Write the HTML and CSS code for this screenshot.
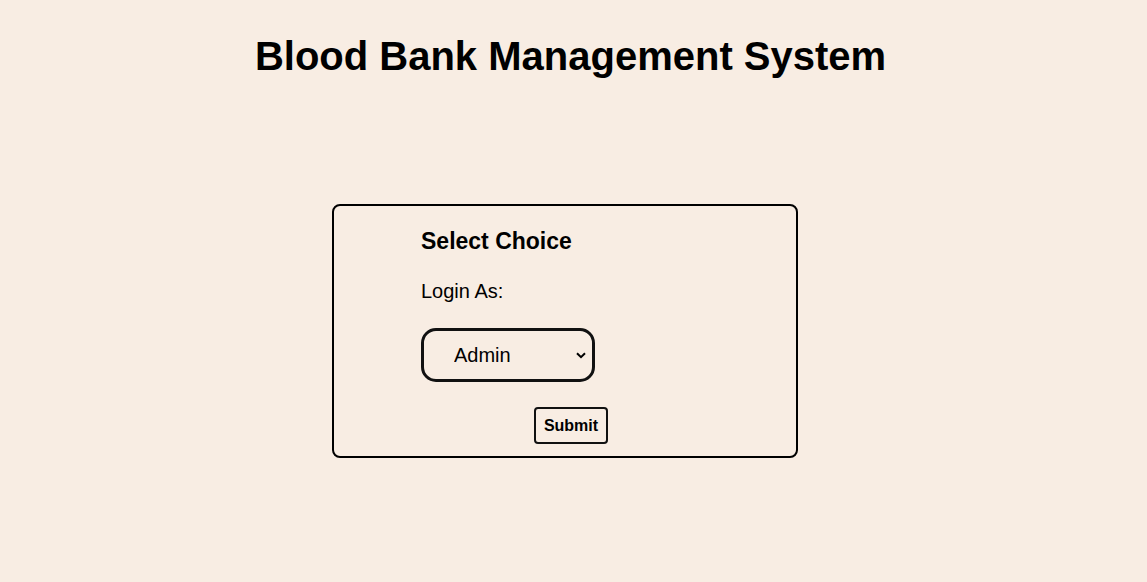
FILE: index.html
```html
<!DOCTYPE html>
<html>
<head>
<meta charset="utf-8">
<title>Blood Bank Management System</title>
<link rel="stylesheet" href="styles.css">
</head>
<body>
<h1 class="title">Blood Bank Management System</h1>
<div class="card">
  <form class="choice-form">
    <h3 class="form-heading">Select Choice</h3>
    <label class="form-label" for="role">Login As:</label>
    <div class="select-wrap">
      <select class="role-select" id="role">
        <option>Admin</option>
        <option>Donor</option>
        <option>Patient</option>
      </select>
      <svg class="select-arrow" width="10" height="7" viewBox="0 0 10 7" aria-hidden="true">
        <path d="M1 1.2 L5 5.2 L9 1.2" fill="none" stroke="#000" stroke-width="2"/>
      </svg>
    </div>
    <button type="button" class="submit-btn">Submit</button>
  </form>
</div>
</body>
</html>
```
FILE: styles.css
```css
html, body {
  margin: 0;
  padding: 0;
  background: #f8ede3;
  font-family: "Liberation Sans", Arial, sans-serif;
  color: #000;
}
.title {
  margin: 33px 0 0;
  padding-right: 6px;
  font-size: 40px;
  font-weight: bold;
  text-align: center;
  line-height: 46px;
}
.card {
  box-sizing: border-box;
  width: 466px;
  margin: 125px 0 0 332px;
  height: 254px;
  border: 2px solid #000;
  border-radius: 8px;
  padding: 22px 0 0 87px;
}
.choice-form {
  display: flex;
  flex-direction: column;
  align-items: flex-start;
}
.form-heading {
  margin: 0;
  font-size: 23px;
  line-height: 26px;
  font-weight: bold;
}
.form-label {
  margin-top: 26px;
  font-size: 20px;
  line-height: 23px;
}
.select-wrap {
  position: relative;
  margin-top: 25px;
  width: 174px;
  height: 54px;
}
.role-select {
  -webkit-appearance: none;
  appearance: none;
  box-sizing: border-box;
  width: 174px;
  height: 54px;
  border: 3px solid #111;
  border-radius: 15px;
  background: transparent;
  font-family: "Liberation Sans", Arial, sans-serif;
  font-size: 20px;
  color: #000;
  padding: 0 24px 0 30px;
  outline: none;
}
.select-arrow {
  position: absolute;
  left: 155px;
  top: 24px;
  pointer-events: none;
}
.submit-btn {
  margin: 25px 0 0 113px;
  box-sizing: border-box;
  width: 74px;
  height: 37px;
  border: 2px solid #111;
  border-radius: 4px;
  background: transparent;
  font-family: "Liberation Sans", Arial, sans-serif;
  font-size: 16px;
  font-weight: bold;
  color: #000;
  padding: 0;
}
```
